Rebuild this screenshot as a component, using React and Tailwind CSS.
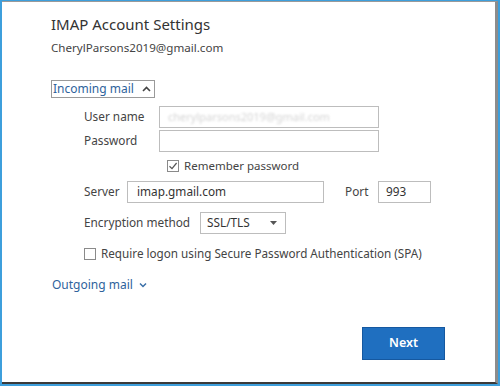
import React from "react";

const font = { fontFamily: '"Noto Sans", "Open Sans", Arial, sans-serif' };

function ChevronUp() {
  return (
    <svg width="9" height="6" viewBox="0 0 9 6" className="ml-[8px]">
      <path d="M1 5 L4.5 1.5 L8 5" fill="none" stroke="#444" strokeWidth="1.6" />
    </svg>
  );
}

function ChevronDown() {
  return (
    <svg width="8" height="6" viewBox="0 0 8 6" className="ml-[6px]">
      <path d="M1 1.5 L4 4.5 L7 1.5" fill="none" stroke="#3a6fa8" strokeWidth="1.5" />
    </svg>
  );
}

function Check({ checked }) {
  return (
    <div className="w-[12px] h-[12px] border border-[#8a8a8a] bg-white flex items-center justify-center">
      {checked && (
        <svg width="10" height="10" viewBox="0 0 10 10">
          <path d="M1.5 5.2 L4 7.6 L8.6 2" fill="none" stroke="#555" strokeWidth="1.2" />
        </svg>
      )}
    </div>
  );
}

export default function App() {
  return (
    <div className="w-[500px] h-[386px] bg-[#3d9fdc] p-[2px] pt-[1px]" style={font}>
      <div className="w-full h-full bg-white border-t border-t-[#9a9a9a] border-r-[3px] border-r-[#8c8c8c] border-b-2 border-b-[#3a3a3a] flex flex-col pl-[49px] pt-[12px] text-[#444]">
        <h1 className="text-[15px] leading-[21px] text-[#333]">IMAP Account Settings</h1>
        <div className="text-[11.6px] leading-[16px] mt-[5px] text-[#444]">CherylParsons2019@gmail.com</div>

        <div className="mt-[24px] w-[104px] h-[18px] border border-[#9a9a9a] flex items-center pl-[1px] text-[#2f639c] text-[12px]">
          Incoming mail
          <ChevronUp />
        </div>

        <div className="pl-[33px] flex flex-col text-[11.8px]">
          <div className="flex items-center mt-[8px]">
            <span className="w-[75px]">User name</span>
            <div className="w-[220px] h-[22px] border border-[#bdbdbd] flex items-center pl-[8px] overflow-hidden">
              <span className="text-[11px] text-[#d4d4d4] blur-[1px]">cherylparsons2019@gmail.com</span>
            </div>
          </div>
          <div className="flex items-center mt-[2px]">
            <span className="w-[75px]">Password</span>
            <div className="w-[220px] h-[22px] border border-[#bdbdbd]" />
          </div>
          <div className="flex items-center mt-[5px] ml-[83px] gap-[5px] h-[17px]">
            <Check checked />
            <span className="text-[11.5px]">Remember password</span>
          </div>
          <div className="flex items-center mt-[7px]">
            <span className="w-[43px]">Server</span>
            <div className="w-[197px] h-[22px] border border-[#bdbdbd] flex items-center pl-[9px] text-[#333]">
              imap.gmail.com
            </div>
            <span className="ml-[21px] w-[33px]">Port</span>
            <div className="w-[53px] h-[22px] border border-[#bdbdbd] flex items-center pl-[7px] text-[#333]">
              993
            </div>
          </div>
          <div className="flex items-center mt-[9px]">
            <span className="w-[116px]">Encryption method</span>
            <div className="w-[86px] h-[22px] border border-[#bdbdbd] flex items-center justify-between pl-[6px] pr-[8px] text-[#333]">
              SSL/TLS
              <svg width="7" height="4" viewBox="0 0 7 4">
                <path d="M0 0 H7 L3.5 4 Z" fill="#555" />
              </svg>
            </div>
          </div>
          <div className="flex items-center mt-[11px] gap-[5px] h-[17px]">
            <Check />
            <span className="text-[11.7px]">Require logon using Secure Password Authentication (SPA)</span>
          </div>
        </div>

        <div className="mt-[14px] flex items-center text-[12px] text-[#2f639c] pl-[1px] h-[17px]">
          Outgoing mail
          <ChevronDown />
        </div>

        <div className="mt-[34px] ml-[311px] w-[83px] h-[33px] bg-[#1f6fc0] border border-[#1558a0] flex items-center justify-center text-white text-[12.5px] font-semibold">
          Next
        </div>
      </div>
    </div>
  );
}
